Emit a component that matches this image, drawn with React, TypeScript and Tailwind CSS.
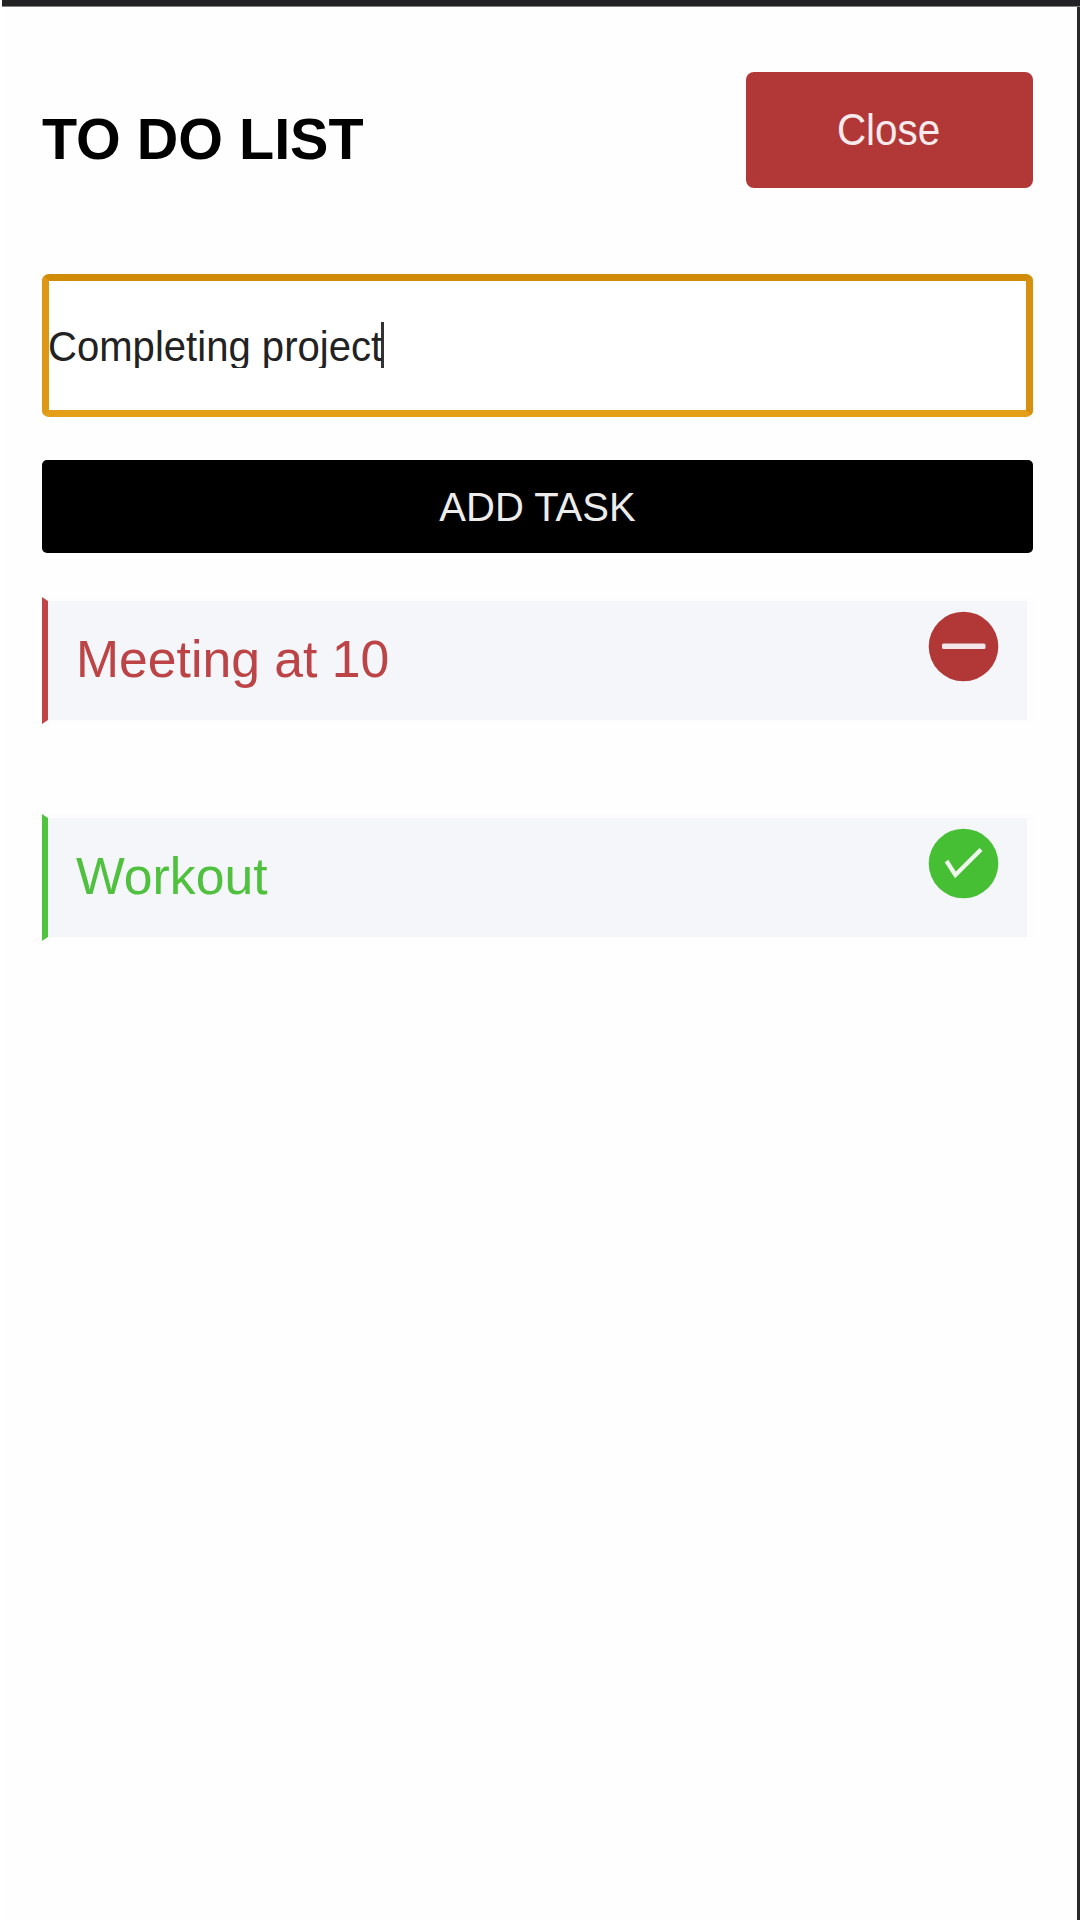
import React from 'react';

function MinusBadge() {
  return (
    <svg className="h-[71px] w-[71px]" viewBox="0 0 71 71" fill="none">
      <circle cx="35.5" cy="35.5" r="34.8" fill="#b23838" />
      <rect x="14" y="32.4" width="43.5" height="5.6" rx="1.5" fill="#f2e6ea" />
    </svg>
  );
}

function CheckBadge() {
  return (
    <svg className="h-[71px] w-[71px]" viewBox="0 0 71 71" fill="none">
      <circle cx="35.5" cy="35.5" r="34.8" fill="#47bf35" />
      <path d="M18.5 33L27.4 47L53 21.5" stroke="#f0f7ee" strokeWidth="4.2" />
    </svg>
  );
}

type TaskProps = { label: string; tone: string; icon: React.ReactNode };

function Task({ label, tone, icon }: TaskProps) {
  return (
    <li
      className={`flex h-[127px] items-start justify-between border-[6px] border-y-[4px] border-[#fdfdfe] bg-[#f4f6fa] pr-[28px] pl-[28px] ${tone}`}
    >
      <span className="pt-[29px] text-[51.7px] leading-[58px] whitespace-nowrap">{label}</span>
      <span className="pt-[10px]">{icon}</span>
    </li>
  );
}

export default function App() {
  return (
    <div className="h-[1920px] w-[1080px] overflow-hidden bg-white pl-[2px] font-['Liberation_Sans',Arial,sans-serif]">
      <div className="h-[7px] border-b border-[#858384] bg-[#232325]" />
      <main className="h-[1913px] border-r-[3px] border-[#2a2a2b] bg-[#fefefe] pt-[65px] pr-[43px] pl-[40px]">
        <header className="flex h-[116px] items-start justify-between">
          <h1 className="pt-[34px] text-[57.5px] leading-[66px] font-bold whitespace-nowrap text-black">TO DO LIST</h1>
          <button className="mr-px flex h-[116px] w-[287px] items-center justify-center rounded-[8px] bg-[#b23838] pt-[2px] text-[43.5px] text-[#f7eaec]">
            <span className="-ml-px scale-x-[0.93]">Close</span>
          </button>
        </header>

        <div className="mt-[86px] mr-px flex h-[143px] items-start rounded-[7px] border-[7px] border-t-[#d08b08] border-r-[#d6900e] border-b-[#e49e17] border-l-[#dd9815] bg-white">
          <div className="mt-[41px] flex h-[46px] items-start overflow-hidden">
            <span className="-ml-px w-[335px] origin-left scale-x-[0.932] text-[43px] leading-[49px] whitespace-nowrap text-[#222]">
              Completing project
            </span>
            <span className="-ml-[2px] h-[46px] w-[3px] bg-[#333]" />
          </div>
        </div>

        <button className="mt-[43px] mr-px flex h-[93px] w-[991px] items-center justify-center rounded-[5px] bg-black pt-px text-[40px] text-[#ececec]">
          ADD TASK
        </button>

        <ul className="mt-[44px] mr-px flex flex-col gap-[90px]">
          <Task label="Meeting at 10" tone="border-l-[#c04547] text-[#bd4446]" icon={<MinusBadge />} />
          <Task label="Workout" tone="border-l-[#4fc23e] text-[#4fc13e]" icon={<CheckBadge />} />
        </ul>
      </main>
    </div>
  );
}
